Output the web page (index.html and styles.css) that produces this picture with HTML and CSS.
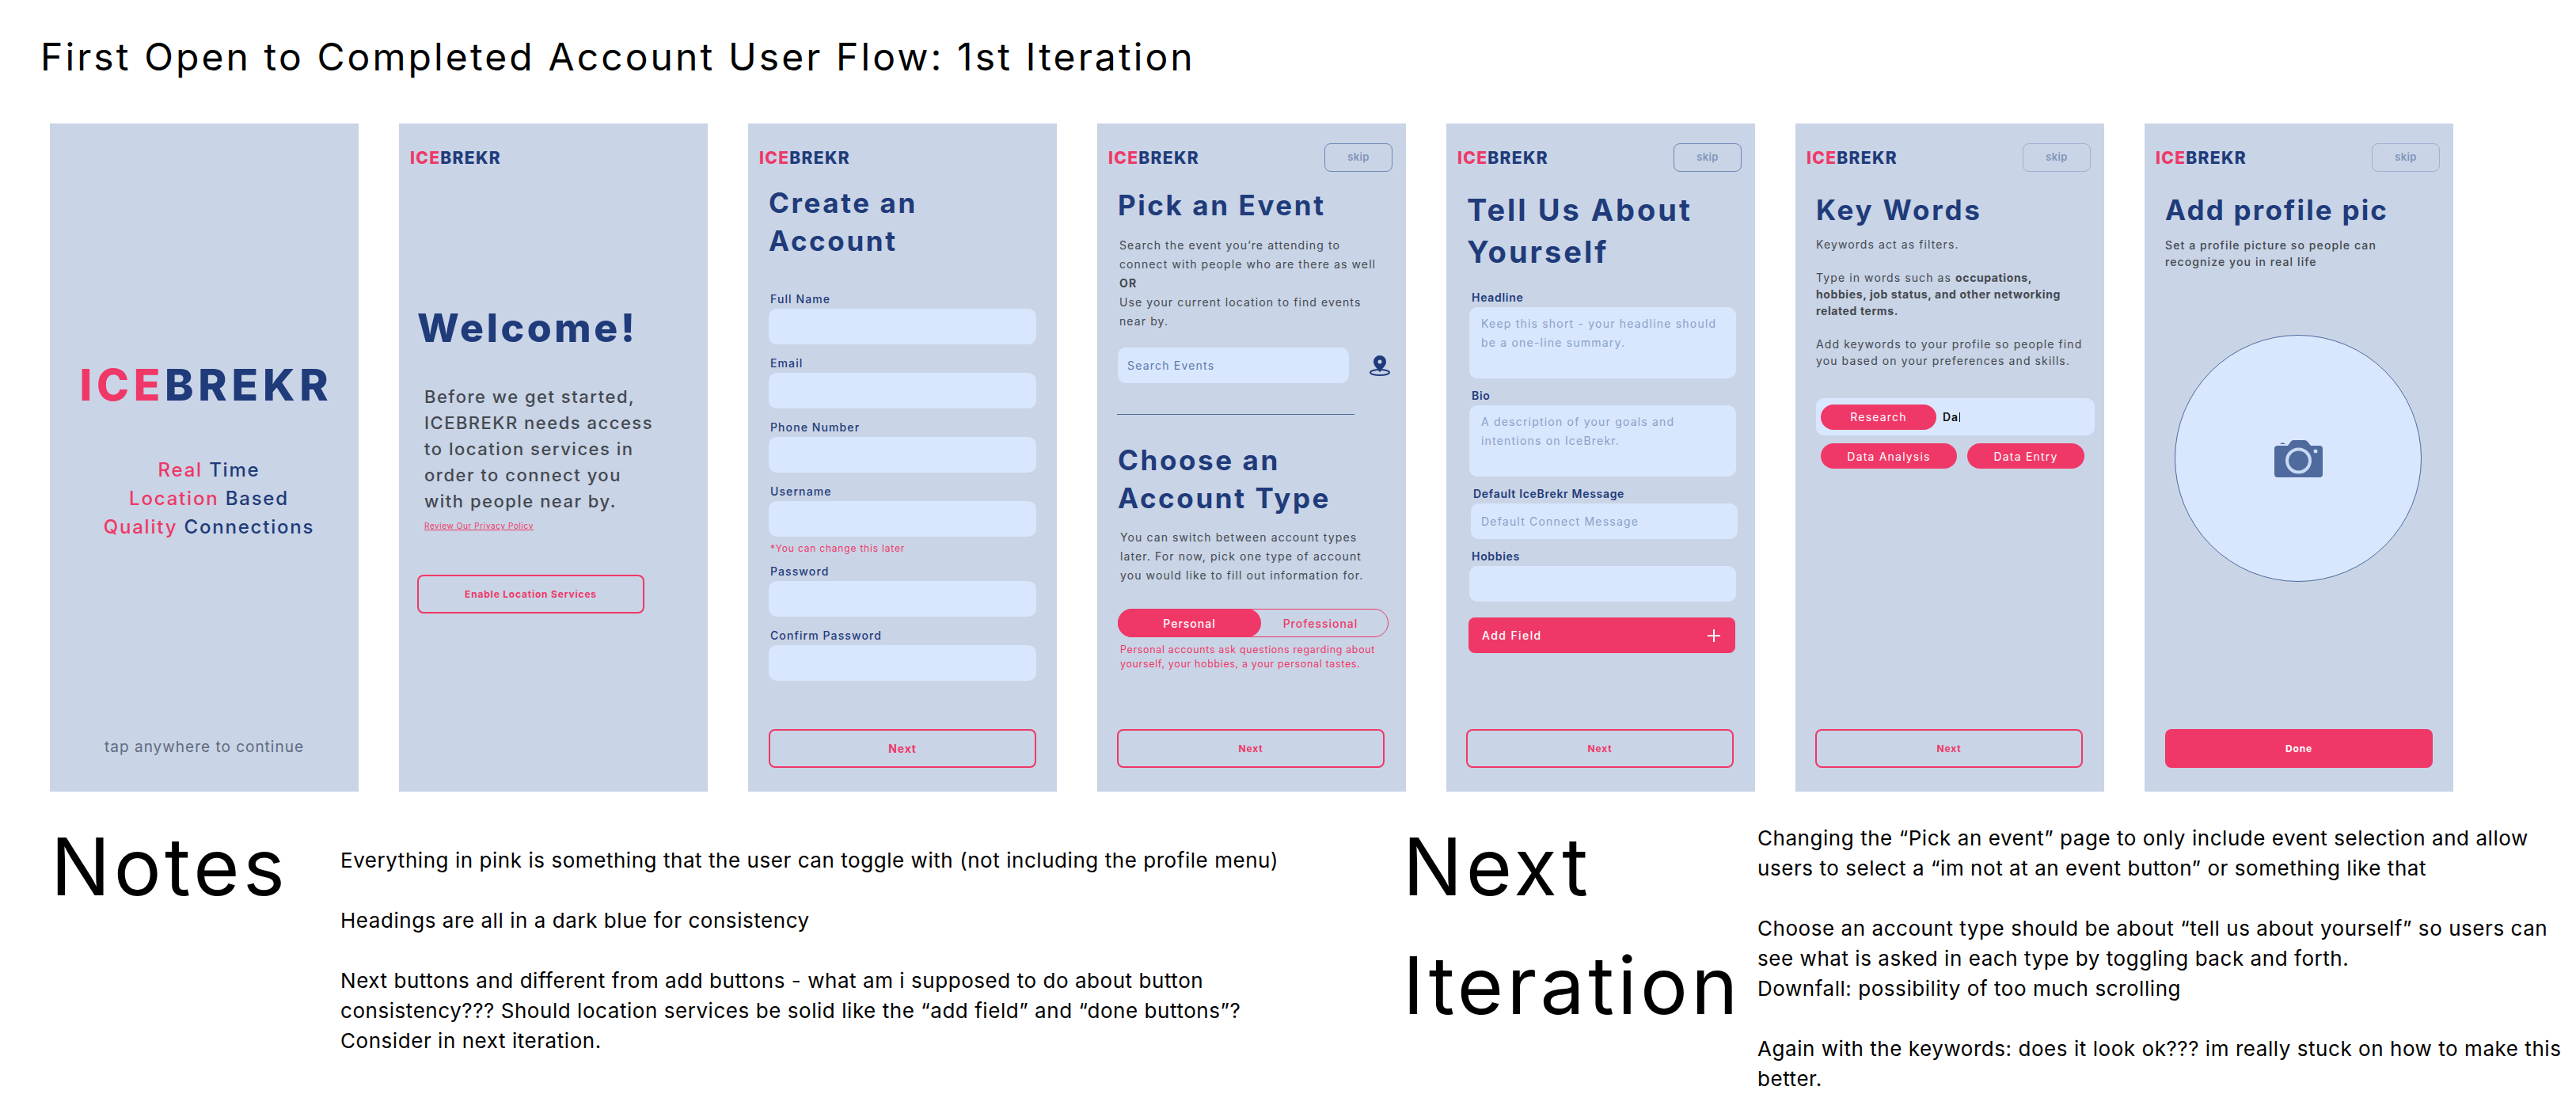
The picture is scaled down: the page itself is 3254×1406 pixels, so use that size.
FILE: index.html
```html
<!DOCTYPE html>
<html lang="en">
<head>
    <meta charset="UTF-8">
    <title>First Open to Completed Account User Flow</title>
    <link rel="stylesheet" href="styles.css">
</head>
<body>

    <h1 class="page-title">First Open to Completed Account User Flow: 1st Iteration</h1>

    <section class="flow">

        <!-- SPLASH -->
        <div class="screen screen-splash">
            <div class="logo-big"><span class="pink">ICE</span>BREKR</div>
            <div class="tagline">
                <span class="pink">Real</span> Time<br>
                <span class="pink">Location</span> Based<br>
                <span class="pink">Quality</span> Connections
            </div>
            <div class="tap">tap anywhere to continue</div>
        </div>

        <!-- WELCOME -->
        <div class="screen">
            <div class="screen-head">
                <div class="logo"><span class="pink">ICE</span>BREKR</div>
            </div>
            <div class="welcome">Welcome!</div>
            <p class="welcome-text">Before we get started,<br>ICEBREKR needs access<br>to location services in<br>order to connect you<br>with people near by.</p>
            <a class="privacy">Review Our Privacy Policy</a>
            <div class="btn btn-outline btn-location">Enable Location Services</div>
        </div>

        <!-- CREATE ACCOUNT -->
        <div class="screen">
            <div class="screen-head">
                <div class="logo"><span class="pink">ICE</span>BREKR</div>
            </div>
            <div class="screen-body">
                <h2 class="heading heading-create">Create an<br>Account</h2>
                <div class="fields-create">
                    <div class="field"><div class="label">Full Name</div><div class="input"></div></div>
                    <div class="field"><div class="label">Email</div><div class="input"></div></div>
                    <div class="field"><div class="label">Phone Number</div><div class="input"></div></div>
                    <div class="field">
                        <div class="label">Username</div><div class="input"></div>
                        <div class="field-note">*You can change this later</div>
                    </div>
                    <div class="field"><div class="label">Password</div><div class="input"></div></div>
                    <div class="field"><div class="label">Confirm Password</div><div class="input"></div></div>
                </div>
                <div class="btn btn-outline btn-next btn-next-big">Next</div>
            </div>
        </div>

        <!-- PICK AN EVENT -->
        <div class="screen">
            <div class="screen-head">
                <div class="logo"><span class="pink">ICE</span>BREKR</div>
                <div class="skip">skip</div>
            </div>
            <div class="screen-body">
                <h2 class="heading heading-event">Pick an Event</h2>
                <p class="copy copy-event">Search the event you’re attending to<br>connect with people who are there as well<br><b>OR</b><br>Use your current location to find events<br>near by.</p>
                <div class="search-row">
                    <div class="input input-search">Search Events</div>
                    <svg class="pin" width="26" height="26" viewBox="0 0 26 26">
                        <ellipse cx="13" cy="21.5" rx="12" ry="3.5" fill="none" stroke="#1f3b7a" stroke-width="2"/>
                        <path d="M13 0a8 8 0 0 1 8 8c0 5-5 8.500-8 13.500C10 16.500 5 13 5 8a8 8 0 0 1 8-8z" fill="#1f3b7a"/>
                        <circle cx="13" cy="8" r="2.500" fill="#c9d4e6"/>
                    </svg>
                </div>
                <div class="divider"></div>
                <h2 class="heading heading-type">Choose an<br>Account Type</h2>
                <p class="copy copy-type">You can switch between account types<br>later. For now, pick one type of account<br>you would like to fill out information for.</p>
                <div class="toggle">
                    <div class="toggle-on">Personal</div>
                    <div class="toggle-off">Professional</div>
                </div>
                <p class="toggle-note">Personal accounts ask questions regarding about<br>yourself, your hobbies, a your personal tastes.</p>
                <div class="btn btn-outline btn-next btn-shift">Next</div>
            </div>
        </div>

        <!-- ABOUT -->
        <div class="screen">
            <div class="screen-head">
                <div class="logo"><span class="pink">ICE</span>BREKR</div>
                <div class="skip">skip</div>
            </div>
            <div class="screen-body">
                <h2 class="heading heading-about">Tell Us About<br>Yourself</h2>
                <div class="fields-about">
                    <div class="about-field">
                        <div class="label label-about">Headline</div>
                        <div class="input input-tall">Keep this short - your headline should<br>be a one-line summary.</div>
                    </div>
                    <div class="about-field">
                        <div class="label label-about">Bio</div>
                        <div class="input input-tall">A description of your goals and<br>intentions on IceBrekr.</div>
                    </div>
                    <div class="about-field about-field-shift">
                        <div class="label label-about">Default IceBrekr Message</div>
                        <div class="input input-hint">Default Connect Message</div>
                    </div>
                    <div class="about-field">
                        <div class="label label-about">Hobbies</div>
                        <div class="input"></div>
                    </div>
                </div>
                <div class="add-field">
                    <span>Add Field</span>
                    <svg width="16" height="16" viewBox="0 0 16 16"><path d="M8 0v16M0 8h16" stroke="#fff" stroke-width="2"/></svg>
                </div>
                <div class="btn btn-outline btn-next btn-shift">Next</div>
            </div>
        </div>

        <!-- KEY WORDS -->
        <div class="screen">
            <div class="screen-head">
                <div class="logo"><span class="pink">ICE</span>BREKR</div>
                <div class="skip skip-light">skip</div>
            </div>
            <div class="screen-body">
                <h2 class="heading heading-keys">Key Words</h2>
                <p class="copy copy-keys">Keywords act as filters.<br><br>Type in words such as <b>occupations,<br>hobbies, job status, and other networking<br>related terms.</b><br><br>Add keywords to your profile so people find<br>you based on your preferences and skills.</p>
                <div class="tag-box">
                    <div class="pill pill-research">Research</div>
                    <div class="typed">Da<i class="caret"></i></div>
                </div>
                <div class="pill-row">
                    <div class="pill pill-analysis">Data Analysis</div>
                    <div class="pill pill-entry">Data Entry</div>
                </div>
                <div class="btn btn-outline btn-next btn-shift">Next</div>
            </div>
        </div>

        <!-- PROFILE PIC -->
        <div class="screen">
            <div class="screen-head">
                <div class="logo"><span class="pink">ICE</span>BREKR</div>
                <div class="skip skip-light">skip</div>
            </div>
            <div class="screen-body">
                <h2 class="heading heading-keys heading-pic">Add profile pic</h2>
                <p class="copy copy-pic">Set a profile picture so people can<br>recognize you in real life</p>
                <div class="avatar">
                    <svg width="61" height="47" viewBox="0 0 61 47">
                        <path d="M4 7h13l4-5.500Q22 0 24 0h14q2 0 3.500 1.500L46 7h11q4 0 4 4v32q0 4-4 4H4q-4 0-4-4V11q0-4 4-4z" fill="#4f6a9d"/>
                        <path d="M7 5q3.500-3.500 7 0z" fill="#4f6a9d"/>
                        <circle cx="30.500" cy="26" r="14.500" fill="none" stroke="#c9daf5" stroke-width="4"/>
                        <circle cx="52" cy="14" r="2.500" fill="#c9daf5"/>
                    </svg>
                </div>
                <div class="btn btn-solid btn-next">Done</div>
            </div>
        </div>

    </section>

    <section class="notes">
        <h2 class="notes-title notes-title-first">Notes</h2>
        <p class="notes-text notes-text-first">Everything in pink is something that the user can toggle with (not including the profile menu)<br><br>Headings are all in a dark blue for consistency<br><br>Next buttons and different from add buttons - what am i supposed to do about button<br>consistency??? Should location services be solid like the “add field” and “done buttons”?<br>Consider in next iteration.</p>
        <h2 class="notes-title notes-title-next">Next<br>Iteration</h2>
        <p class="notes-text">Changing the “Pick an event” page to only include event selection and allow<br>users to select a “im not at an event button” or something like that<br><br>Choose an account type should be about “tell us about yourself” so users can<br>see what is asked in each type by toggling back and forth.<br>Downfall: possibility of too much scrolling<br><br>Again with the keywords: does it look ok??? im really stuck on how to make this<br>better.</p>
    </section>

</body>
</html>
```

FILE: styles.css
```css
*{
    margin: 0;
    padding: 0;
    box-sizing: border-box;
}

body{
    font-family: Inter, "Liberation Sans", sans-serif;
    background-color: #fff;
    color: #000;
    width: 3254px;
    height: 1406px;
    overflow: hidden;
}

.pink{
    color: #ef3867;
}

.page-title{
    font-size: 48px;
    font-weight: 400;
    line-height: 58px;
    letter-spacing: 3.100px;
    padding: 43px 0 0 51px;
}

.flow{
    display: flex;
    gap: 51px;
    margin: 55px 0 0 63px;
}

.screen{
    width: 390px;
    height: 844px;
    flex: none;
    display: flex;
    flex-direction: column;
    background-color: #c9d4e6;
    color: #1f3b7a;
}

.screen-head{
    display: flex;
    justify-content: space-between;
    align-items: center;
    height: 36px;
    margin: 25px 17px 0 14px;
}

.logo{
    font-size: 21px;
    font-weight: 800;
    letter-spacing: 1.300px;
    margin-top: 1px;
}

.skip{
    width: 86px;
    height: 36px;
    display: flex;
    align-items: center;
    justify-content: center;
    border: 1px solid #6f87b3;
    border-radius: 8px;
    font-size: 13px;
    font-weight: 600;
    letter-spacing: .3px;
    color: #7f93bb;
    padding-bottom: 2px;
}

.skip-light{
    border-color: #9fb1d1;
}

.screen-body{
    flex: 1;
    display: flex;
    flex-direction: column;
    align-items: flex-start;
    padding-left: 26px;
}

/* splash */
.screen-splash{
    align-items: center;
}

.logo-big{
    font-size: 55px;
    font-weight: 800;
    line-height: 60px;
    letter-spacing: 5.800px;
    margin-top: 300px;
    padding-left: 5px;
}

.tagline{
    font-size: 24px;
    font-weight: 500;
    line-height: 36px;
    letter-spacing: 1.800px;
    text-align: center;
    margin-top: 60px;
    padding-left: 12px;
}

.tap{
    font-size: 19px;
    line-height: 24px;
    letter-spacing: 1px;
    color: #5f6b80;
    margin-top: auto;
    margin-bottom: 44px;
}

/* welcome */
.welcome{
    font-size: 50px;
    font-weight: 800;
    line-height: 60px;
    letter-spacing: 3.600px;
    margin: 167px 0 0 23px;
}

.welcome-text{
    font-size: 22px;
    font-weight: 500;
    line-height: 33px;
    letter-spacing: 1.500px;
    color: #444950;
    margin: 41px 0 0 32px;
}

.privacy{
    font-size: 10px;
    line-height: 14px;
    letter-spacing: .6px;
    color: #ef3867;
    text-decoration: underline;
    margin: 7px 0 0 32px;
}

.btn{
    display: flex;
    align-items: center;
    justify-content: center;
    height: 49px;
    width: 338px;
    border-radius: 8px;
    font-size: 12px;
    font-weight: 700;
    letter-spacing: .8px;
}

.btn-outline{
    border: 2px solid #ef3867;
    color: #ef3867;
}

.btn-solid{
    background-color: #ef3867;
    color: #fff;
}

.btn-location{
    width: 287px;
    margin: 55px 0 0 23px;
}

.btn-next{
    margin-top: auto;
    margin-bottom: 30px;
}

.btn-next-big{
    font-size: 14px;
}

.btn-shift{
    margin-left: -1px;
}

/* headings and text */
.heading{
    font-size: 35px;
    font-weight: 700;
    line-height: 48px;
    letter-spacing: 2.600px;
}

.heading-create{
    margin-top: 15px;
}

.heading-event{
    margin-top: 18px;
}

.heading-type{
    margin-top: 33px;
}

.heading-about{
    font-size: 38px;
    line-height: 53px;
    letter-spacing: 3px;
    margin-top: 22px;
}

.heading-keys{
    letter-spacing: 2.800px;
    margin-top: 24px;
}

.heading-pic{
    letter-spacing: 2.200px;
}

.copy{
    font-size: 14px;
    letter-spacing: 1.100px;
    color: #444950;
}

.copy-event{
    line-height: 24px;
    margin: 15px 0 0 2px;
}

.copy-type{
    line-height: 24px;
    margin: 14px 0 0 3px;
}

.copy-keys{
    line-height: 21px;
    margin-top: 9px;
}

.copy-keys b{
    letter-spacing: .6px;
}

.copy-pic{
    line-height: 21px;
    font-weight: 500;
    margin-top: 10px;
}

/* form */
.fields-create{
    margin-top: 41px;
}

.field{
    margin: 0 0 15px 0;
}

.label{
    font-size: 14px;
    font-weight: 500;
    line-height: 18px;
    letter-spacing: 1.100px;
    margin: 0 0 3px 2px;
}

.input{
    width: 338px;
    height: 45px;
    border-radius: 10px;
    background-color: #d8e7fd;
    font-size: 14px;
    letter-spacing: 1.200px;
    color: #8ba0c7;
}

.field-note{
    font-size: 12px;
    line-height: 16px;
    letter-spacing: .8px;
    color: #ef3867;
    margin: 7px 0 -3px 2px;
}

.search-row{
    display: flex;
    align-items: center;
    margin-top: 21px;
}

.input-search{
    width: 292px;
    display: flex;
    align-items: center;
    padding-left: 12px;
    color: #5d78ad;
}

.pin{
    margin-left: 26px;
}

.divider{
    width: 300px;
    height: 1px;
    background-color: #4f6a9d;
    margin: 39px 0 0 -1px;
}

.toggle{
    display: flex;
    width: 342px;
    height: 36px;
    margin-top: 30px;
    border: 1px solid #ef3867;
    border-radius: 18px;
    font-size: 14px;
    font-weight: 500;
    letter-spacing: 1px;
}

.toggle-on{
    width: 181px;
    margin: -1px 0 -1px -1px;
    border-radius: 18px;
    background-color: #ef3867;
    color: #fff;
    display: flex;
    align-items: center;
    justify-content: center;
}

.toggle-off{
    flex: 1;
    color: #ef3867;
    display: flex;
    align-items: center;
    justify-content: center;
    padding-right: 10px;
}

.toggle-note{
    font-size: 12.500px;
    line-height: 18px;
    letter-spacing: .65px;
    color: #ef3867;
    margin: 7px 0 0 3px;
}

/* about */
.fields-about{
    margin-top: 22px;
}

.about-field{
    margin: 0 0 13px 3px;
}

.about-field-shift{
    margin-left: 5px;
}

.label-about{
    font-weight: 600;
    letter-spacing: .7px;
    margin-left: 3px;
}

.label-about + .input{
    width: 337px;
}

.input-tall{
    height: 90px;
    padding: 9px 0 0 15px;
    line-height: 24px;
}

.input-hint{
    display: flex;
    align-items: center;
    padding-left: 13px;
}

.add-field{
    display: flex;
    align-items: center;
    justify-content: space-between;
    width: 337px;
    height: 45px;
    margin: 7px 0 0 2px;
    padding: 0 19px 0 17px;
    border-radius: 8px;
    background-color: #ef3867;
    color: #fff;
    font-size: 14px;
    font-weight: 500;
    letter-spacing: 1.400px;
}

/* keywords */
.tag-box{
    display: flex;
    align-items: center;
    gap: 8px;
    width: 352px;
    height: 47px;
    margin-top: 37px;
    padding-left: 6px;
    border-radius: 10px;
    background-color: #d8e7fd;
}

.pill{
    height: 32px;
    display: flex;
    align-items: center;
    justify-content: center;
    border-radius: 16px;
    background-color: #ef3867;
    color: #fff;
    font-size: 14px;
    letter-spacing: 1.200px;
}

.pill-research{
    width: 146px;
}

.pill-analysis{
    width: 172px;
}

.pill-entry{
    width: 148px;
}

.typed{
    display: flex;
    align-items: center;
    font-size: 14px;
    font-weight: 600;
    letter-spacing: .8px;
    color: #111;
}

.caret{
    display: block;
    width: 1px;
    height: 12px;
    margin-left: 1px;
    background-color: #111;
}

.pill-row{
    display: flex;
    gap: 13px;
    margin: 10px 0 0 6px;
}

/* profile pic */
.avatar{
    width: 312px;
    height: 312px;
    display: flex;
    align-items: center;
    justify-content: center;
    margin: 82px 0 0 12px;
    border: 1px solid #4f6a9d;
    border-radius: 50%;
    background-color: #d8e7fd;
}

/* notes */
.notes{
    display: flex;
    align-items: flex-start;
    margin-top: 20px;
    padding-left: 64px;
}

.notes-title{
    font-size: 100px;
    font-weight: 400;
    line-height: 150px;
    letter-spacing: 4.400px;
}

.notes-title-first{
    width: 366px;
}

.notes-title-next{
    width: 448px;
    margin-left: 342px;
}

.notes-text{
    font-size: 26px;
    line-height: 38px;
    letter-spacing: .55px;
    margin-top: 20px;
    white-space: nowrap;
}

.notes-text-first{
    width: 1000px;
    margin-top: 48px;
}
```
